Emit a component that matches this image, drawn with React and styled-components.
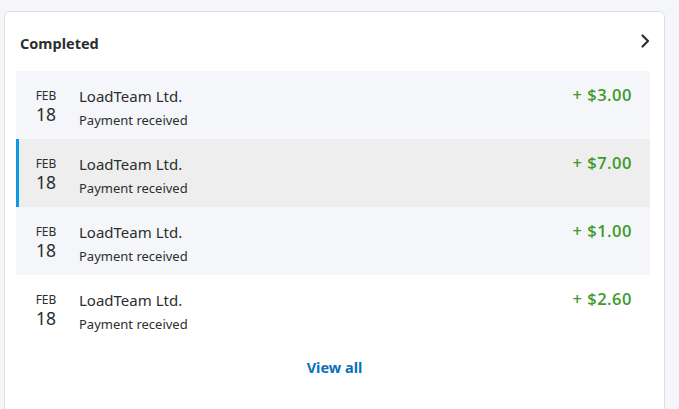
import React from "react"
import styled, { createGlobalStyle } from "styled-components"

const GlobalStyle = createGlobalStyle`
  body {
    margin: 0;
    background: #f5f6f9;
    font-family: "Noto Sans", "Open Sans", sans-serif;
    color: #2c2e2f;
  }
`

const Page = styled.div`
  height: 409px;
  overflow: hidden;
  padding: 11px 14px 0 4px;
`

const Card = styled.section`
  background: #fff;
  border: 1px solid #dedfe2;
  border-radius: 6px;
  padding: 0 14px 20px 11px;
  min-height: 420px;
`

const Header = styled.div`
  display: flex;
  align-items: center;
  justify-content: space-between;
  height: 59px;
  padding: 0 0 0 4px;
`

const Title = styled.h2`
  margin: 0;
  font-size: 14.5px;
  font-weight: 700;
  color: #2c2e2f;
  position: relative;
  top: 1px;
`

const Chevron = styled.svg`
  width: 16px;
  height: 16px;
  margin-right: -4px;
  position: relative;
  top: -1px;
`

const List = styled.div`
  display: flex;
  flex-direction: column;
`

const Row = styled.div`
  display: flex;
  height: 68px;
  background: ${p => p.$bg};
  border-left: 3px solid ${p => (p.$active ? "#0c9ae0" : "transparent")};
  padding: 0 18px 0 0;
`

const DateCol = styled.div`
  width: 54px;
  display: flex;
  flex-direction: column;
  align-items: center;
  gap: 4px;
  padding-top: 19px;
  color: #2c2e2f;
`

const Month = styled.span`
  font-size: 12px;
  line-height: 12px;
`

const Day = styled.span`
  font-size: 17.5px;
  line-height: 17px;
`

const Info = styled.div`
  flex: 1;
  padding: 14px 0 0 6px;
  display: flex;
  flex-direction: column;
`

const Name = styled.span`
  font-size: 15px;
  line-height: 22px;
  color: #2c2e2f;
`

const Sub = styled.span`
  margin-top: 3px;
  font-size: 13px;
  line-height: 20px;
  color: #2c2e2f;
`

const Amount = styled.span`
  padding-top: 13px;
  font-family: "Open Sans", "Noto Sans", sans-serif;
  font-size: 16.5px;
  line-height: 22px;
  letter-spacing: 0.5px;
  color: #3e9a2b;
  font-weight: 600;
`

const Footer = styled.div`
  display: flex;
  justify-content: center;
  padding-top: 14px;
`

const ViewAll = styled.a`
  font-size: 14.5px;
  font-weight: 700;
  color: #0b6fb8;
  text-decoration: none;
  margin-left: 3px;
`

const rows = [
  { amount: "+ $3.00", bg: "#f5f6f9" },
  { amount: "+ $7.00", bg: "#eeeeee", active: true },
  { amount: "+ $1.00", bg: "#f5f6f9" },
  { amount: "+ $2.60", bg: "#ffffff" },
]

export default function App() {
  return (
    <Page>
      <GlobalStyle />
      <Card>
        <Header>
          <Title>Completed</Title>
          <Chevron viewBox="0 0 16 16" fill="none">
            <path d="M4.5 2.5 L10 8 L4.5 13.5" stroke="#2c2e2f" strokeWidth="2.2" strokeLinecap="round" strokeLinejoin="round" />
          </Chevron>
        </Header>
        <List>
          {rows.map((r, i) => (
            <Row key={i} $bg={r.bg} $active={r.active}>
              <DateCol>
                <Month>FEB</Month>
                <Day>18</Day>
              </DateCol>
              <Info>
                <Name>LoadTeam Ltd.</Name>
                <Sub>Payment received</Sub>
              </Info>
              <Amount>{r.amount}</Amount>
            </Row>
          ))}
        </List>
        <Footer>
          <ViewAll href="#">View all</ViewAll>
        </Footer>
      </Card>
    </Page>
  )
}
